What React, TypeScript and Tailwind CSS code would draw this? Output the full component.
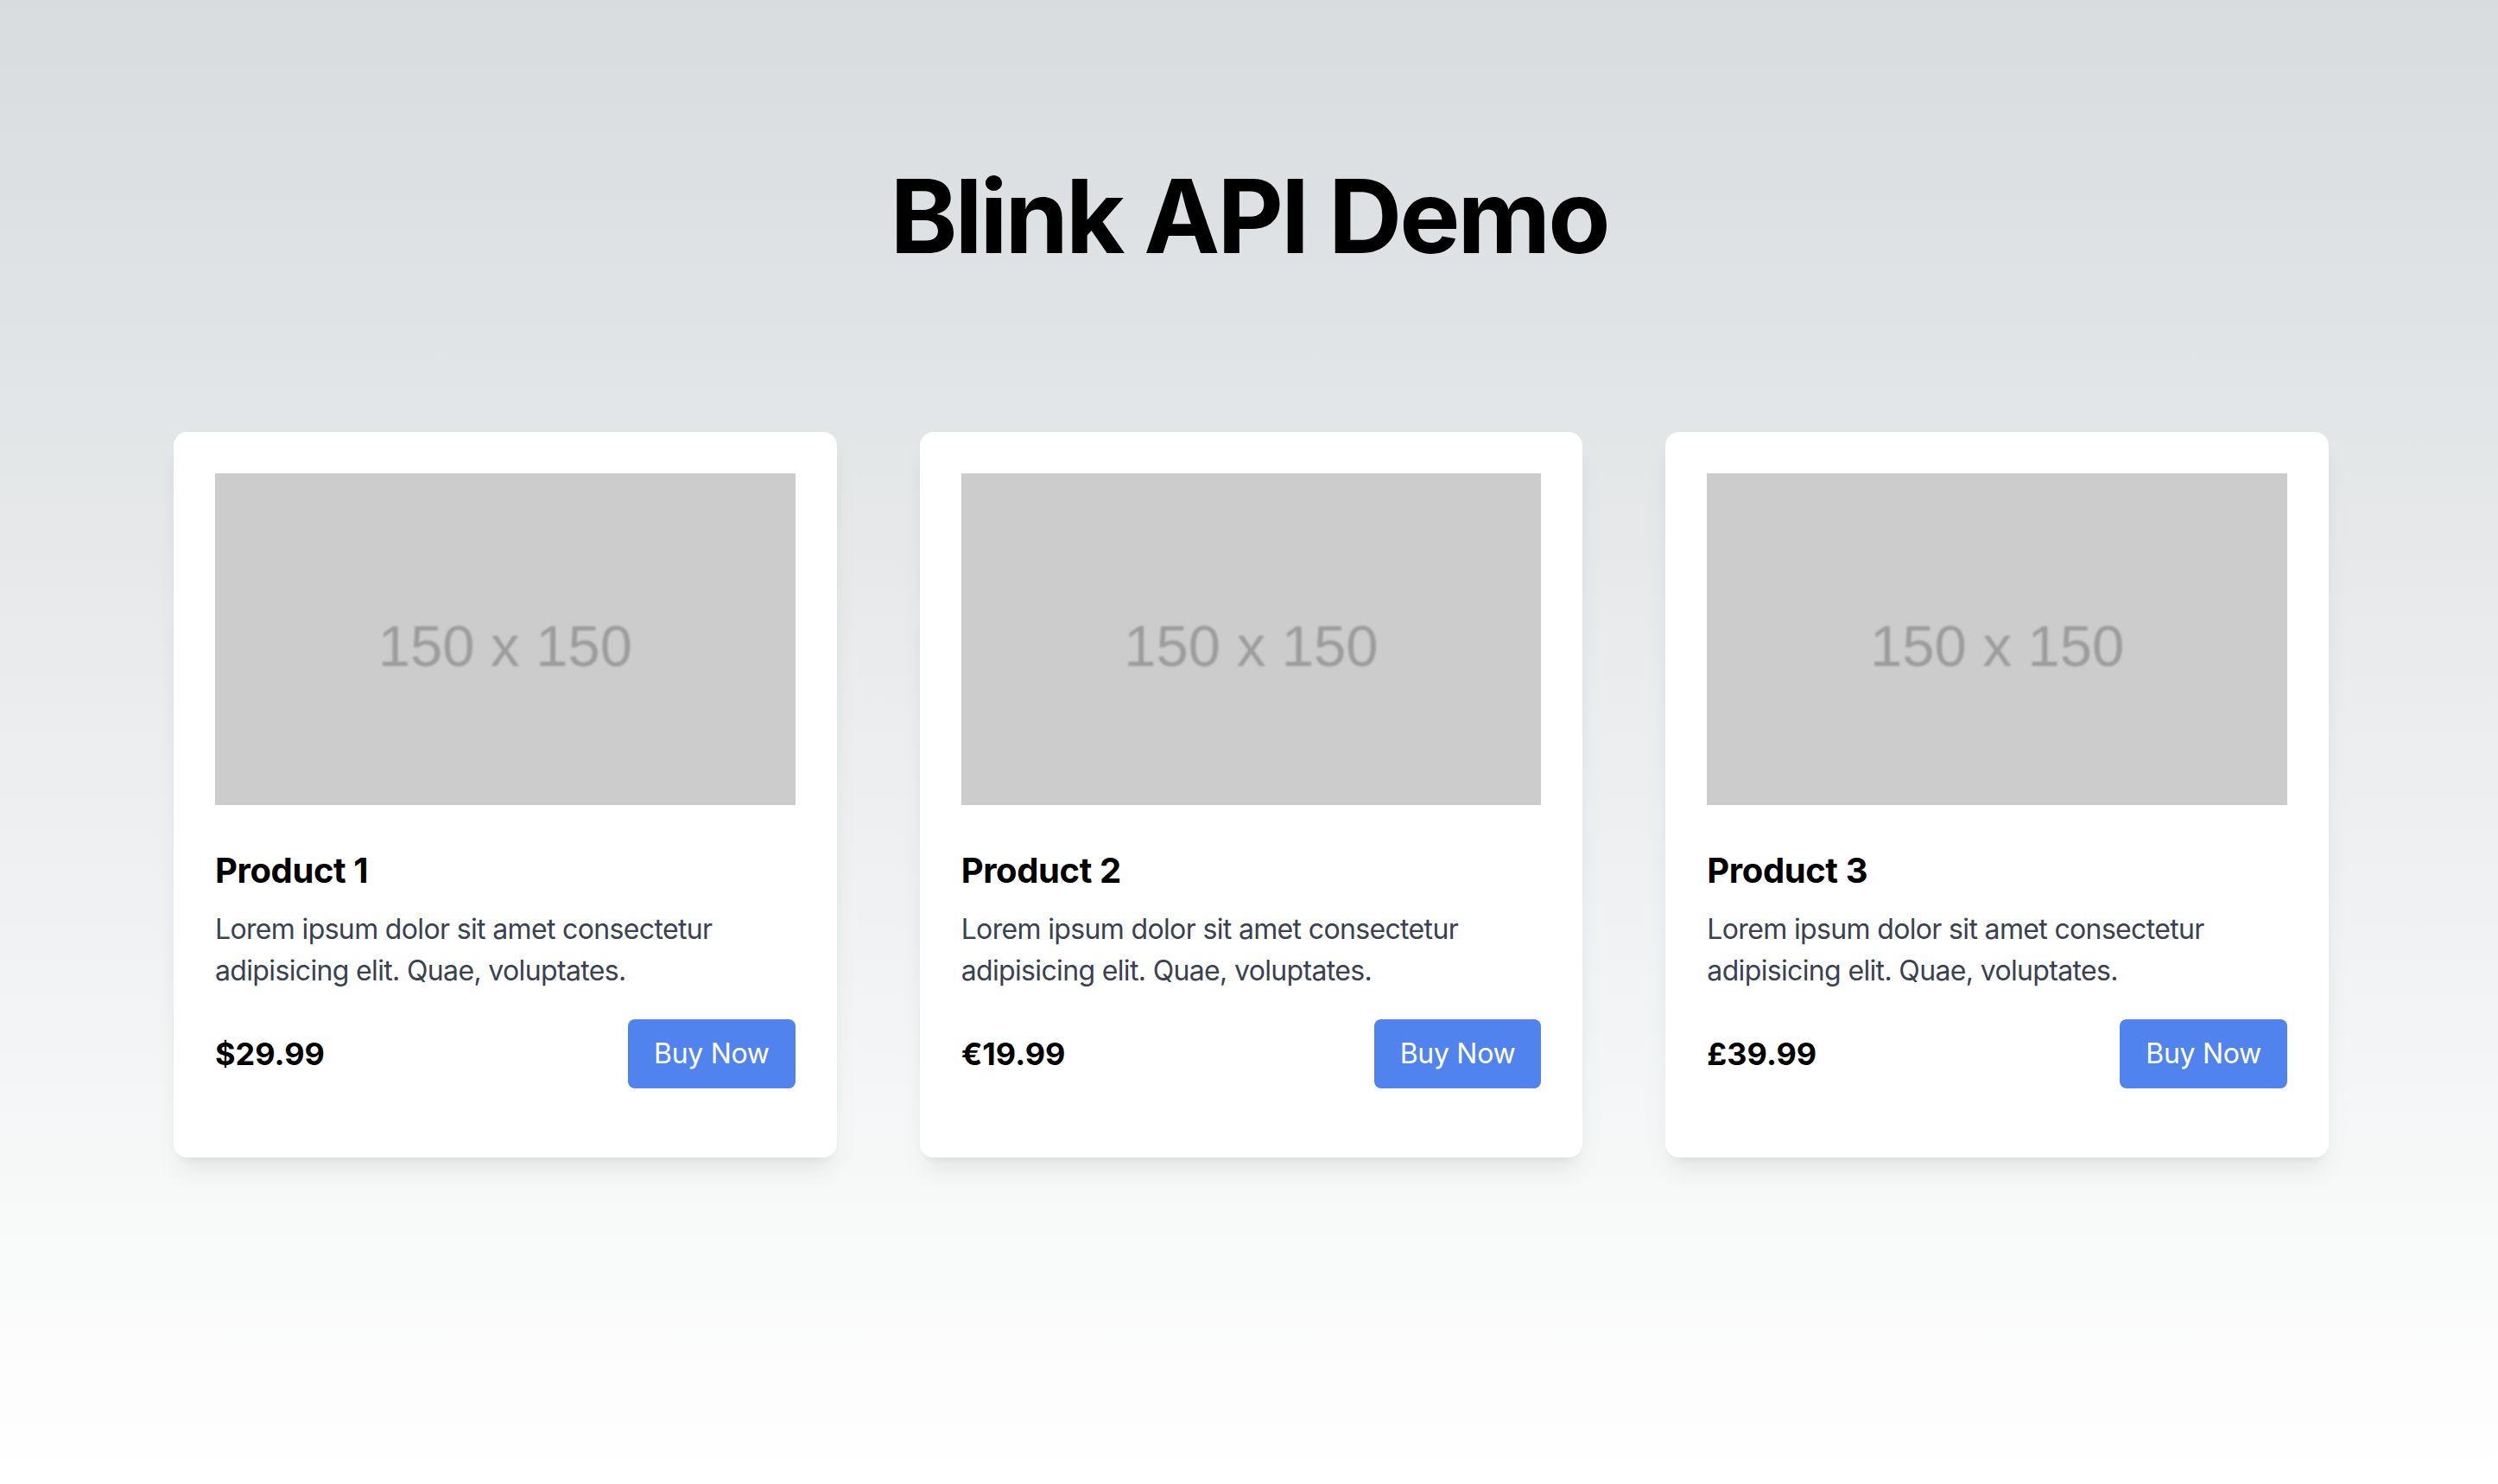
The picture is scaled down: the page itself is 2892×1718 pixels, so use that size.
import React from 'react';

interface Product {
  name: string;
  price: string;
}

const products: Product[] = [
  { name: 'Product 1', price: '$29.99' },
  { name: 'Product 2', price: '€19.99' },
  { name: 'Product 3', price: '£39.99' },
];

const description = 'Lorem ipsum dolor sit amet consectetur adipisicing elit. Quae, voluptates.';

// stand-in for the 150x150 placeholder picture, stretched to fill the card
const Placeholder: React.FC = () => (
  <div className="h-[384px] w-full bg-[#cccccc] flex items-center justify-center overflow-hidden">
    <span className="mt-[14px] text-[67px] leading-none text-[#9c9c9c] blur-[1.2px] font-['Liberation_Sans',Arial,sans-serif]">
      150 x 150
    </span>
  </div>
);

const ProductCard: React.FC<{ product: Product }> = ({ product }) => (
  <div className="bg-white rounded-[16px] px-[48px] pt-[48px] pb-[80px] shadow-[0_20px_30px_-6px_rgba(0,0,0,0.08),0_8px_12px_-8px_rgba(0,0,0,0.08)]">
    <Placeholder />
    <h2 className="mt-[48px] text-[40px] leading-[56px] font-bold text-black tracking-[-0.4px]">{product.name}</h2>
    <p className="mt-[16px] text-[32px] leading-[48px] text-[#3a4150] tracking-[-0.65px]">{description}</p>
    <div className="mt-[32px] flex items-center justify-between">
      <span className="text-[36px] leading-[56px] font-bold text-black">{product.price}</span>
      <button className="h-[80px] px-[30px] rounded-[8px] bg-[#5083ee] text-white text-[32px] leading-[48px] tracking-[-0.3px]">
        Buy Now
      </button>
    </div>
  </div>
);

export default function App() {
  return (
    <div className="min-h-screen bg-gradient-to-b from-[#d8dcde] to-white font-['Inter',sans-serif]">
      <div className="pt-[191px] pb-[200px]">
        <h1 className="text-center text-[118px] leading-none font-bold text-black tracking-[-3px]">Blink API Demo</h1>
        <div className="mt-[191px] ml-[201px] w-[2495px] grid grid-cols-3 gap-[96px]">
          {products.map((p) => (
            <ProductCard key={p.name} product={p} />
          ))}
        </div>
      </div>
    </div>
  );
}
